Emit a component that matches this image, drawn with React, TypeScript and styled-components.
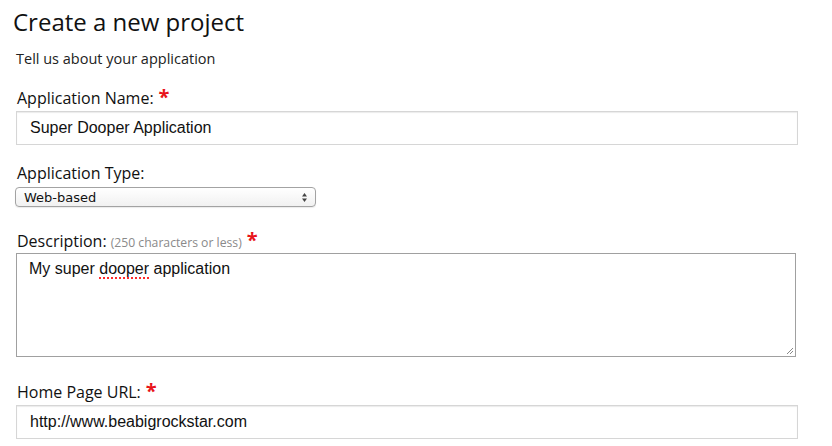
import React from "react";
import styled, { createGlobalStyle } from "styled-components";

const GlobalStyle = createGlobalStyle`
  html, body {
    margin: 0;
    padding: 0;
    background: #ffffff;
  }
  body {
    font-family: "Open Sans", "Liberation Sans", sans-serif;
    color: #111;
  }
`;

const Page = styled.div`
  display: flex;
  flex-direction: column;
  padding: 6px 34px 0 13px;
  width: 832px;
  box-sizing: border-box;
`;

const Title = styled.h1`
  margin: 0;
  font-size: 24px;
  font-weight: 400;
  line-height: 32px;
  color: #111;
`;

const Form = styled.form`
  display: flex;
  flex-direction: column;
  padding-left: 3px;
`;

const Intro = styled.p`
  margin: 11px 0 0;
  font-size: 14.5px;
  line-height: 20px;
  color: #222;
`;

const Field = styled.div<{ $top: number }>`
  display: flex;
  flex-direction: column;
  margin-top: ${(p) => p.$top}px;
`;

const Label = styled.label<{ $gap: number }>`
  display: flex;
  align-items: baseline;
  height: 22px;
  font-size: 16px;
  line-height: 22px;
  color: #111;
  padding-left: 1px;
  margin-bottom: ${(p) => p.$gap}px;
`;

const Hint = styled.span`
  font-size: 12.2px;
  color: #8a8a8a;
  margin-left: 4px;
`;

const Required = styled.span`
  color: #e8141b;
  font-size: 20px;
  font-weight: 700;
  margin-left: 5px;
  line-height: 1;
`;

const TextInput = styled.input`
  box-sizing: border-box;
  width: 782px;
  height: 34px;
  padding: 0 13px;
  border: 1px solid #d6d6d6;
  box-shadow: inset 0 1px 1px rgba(0, 0, 0, 0.08);
  font-family: "Liberation Sans", Arial, sans-serif;
  font-size: 16px;
  color: #111;
  background: #fff;
  outline: none;
`;

const SelectBox = styled.div`
  box-sizing: border-box;
  width: 301px;
  height: 20px;
  margin-left: -1px;
  border: 1px solid #a3a3a3;
  border-radius: 4px;
  background: linear-gradient(#ffffff, #f1f1f1);
  box-shadow: 0 1px 1px rgba(0, 0, 0, 0.08);
  display: flex;
  align-items: center;
  justify-content: space-between;
  padding: 0 7px 0 8px;
  font-family: "DejaVu Sans", "Liberation Sans", sans-serif;
  font-size: 13px;
  color: #111;
`;

const TextArea = styled.div`
  position: relative;
  box-sizing: border-box;
  width: 780px;
  height: 104px;
  padding: 5px 12px;
  border: 1px solid #a0a0a0;
  font-family: "Liberation Sans", Arial, sans-serif;
  font-size: 16px;
  line-height: 20px;
  color: #111;
  background: #fff;
`;

const Misspelt = styled.span`
  text-decoration: underline dotted #ff2a2a;
  text-underline-offset: 3px;
  text-decoration-thickness: 2px;
`;

const Grip = styled.svg`
  position: absolute;
  right: 1px;
  bottom: 1px;
`;

const Arrows = () => (
  <svg width="7" height="11" viewBox="0 0 7 11">
    <path d="M3.5 1 L6 4.5 H1 Z" fill="#444" />
    <path d="M3.5 10 L6 6.5 H1 Z" fill="#444" />
  </svg>
);

export default function App() {
  return (
    <>
      <GlobalStyle />
      <Page>
        <Title>Create a new project</Title>
        <Form>
          <Intro>Tell us about your application</Intro>
          <Field $top={18}>
            <Label $gap={2}>
              Application Name:<Required>*</Required>
            </Label>
            <TextInput defaultValue="Super Dooper Application" />
          </Field>
          <Field $top={17}>
            <Label $gap={3}>Application Type:</Label>
            <SelectBox>
              <span>Web-based</span>
              <Arrows />
            </SelectBox>
          </Field>
          <Field $top={23}>
            <Label $gap={1}>
              Description:<Hint>(250 characters or less)</Hint>
              <Required>*</Required>
            </Label>
            <TextArea>
              My super <Misspelt>dooper</Misspelt> application
              <Grip width="9" height="9" viewBox="0 0 9 9">
                <path d="M8 2 L2 8 M8 5 L5 8" stroke="#888" strokeWidth="1" />
              </Grip>
            </TextArea>
          </Field>
          <Field $top={24}>
            <Label $gap={2}>
              Home Page URL:<Required>*</Required>
            </Label>
            <TextInput defaultValue="http://www.beabigrockstar.com" />
          </Field>
        </Form>
      </Page>
    </>
  );
}
